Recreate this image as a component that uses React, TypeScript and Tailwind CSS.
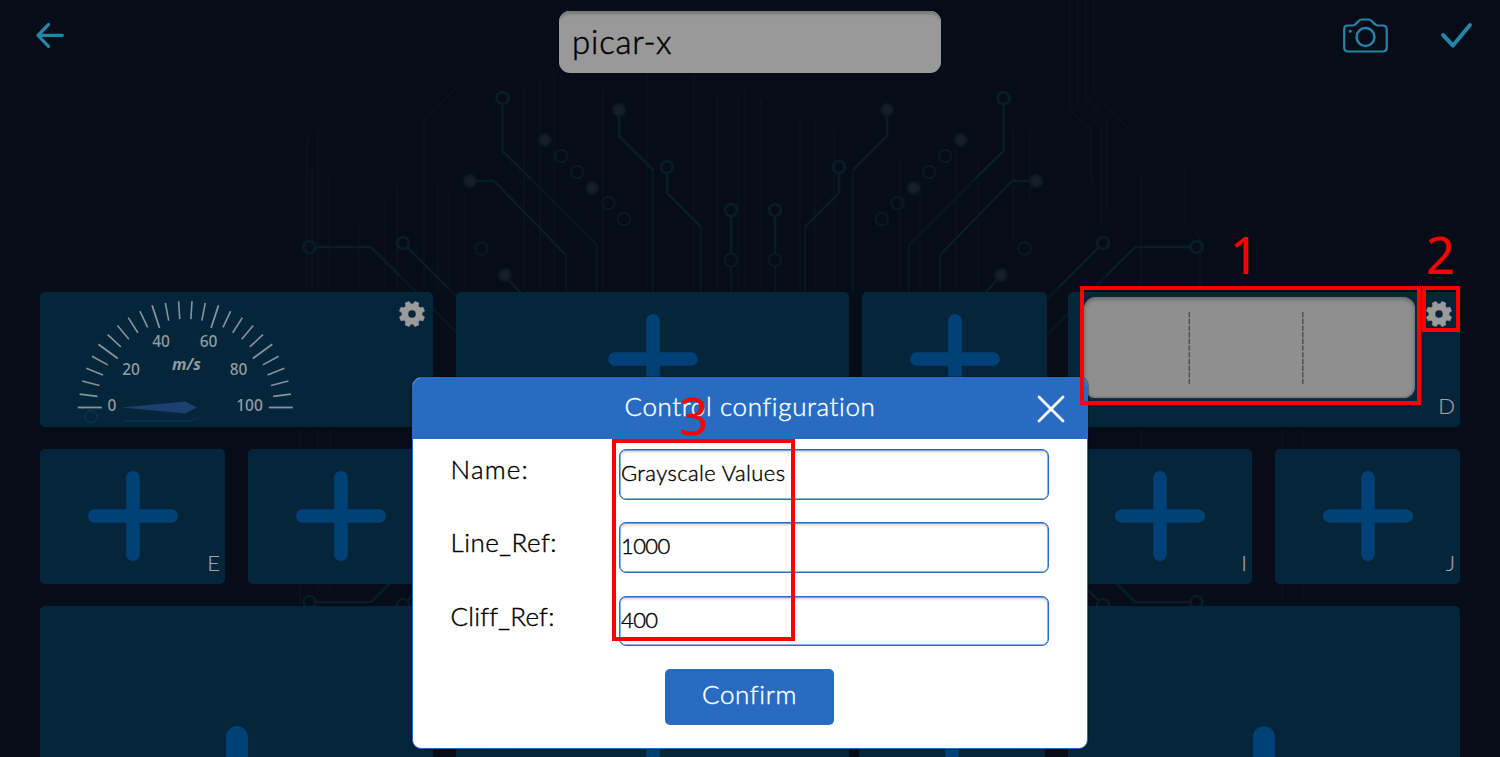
import React from "react";

const FONT = "font-['Lato','Open_Sans',sans-serif]";

type Pt = [number, number];

const rings: Pt[] = [[502.5, 98], [667, 167], [731, 210], [403, 243], [309.5, 247]];
const faintRings: Pt[] = [[561, 156], [577, 172], [608.5, 203], [624, 219], [731, 260], [481.5, 248.5]];
const dots: Pt[] = [[619, 110], [545, 140], [592.5, 188], [470, 181], [505, 275], [667, 327]];
const traces = [
  "M502.5 104V151L532 180",
  "M619 116V136L653 170",
  "M667 173V193L701 227",
  "M731 216V254",
  "M476 181H494L566 255",
  "M408 248L448 288",
  "M316 247H371L400 276",
  "M509 280L529 302V318",
  "M667 333V352",
];
const faintTraces = [
  "M532 180L597 245V292",
  "M653 170V292",
  "M701 227V292",
  "M731 267V292",
  "M566 255V292",
  "M448 288L500 340",
  "M400 276L469 345V376",
];
const hairlines = [
  [307, 140, 290], [312, 170, 290], [318, 130, 290], [329, 175, 290], [359, 225, 290], [385, 200, 290],
  [397, 185, 290], [438, 180, 290], [449, 190, 290], [465, 195, 290], [524, 90, 290], [540, 80, 290],
  [554, 75, 290], [603, 90, 290], [647, 75, 290], [694, 75, 290], [717, 95, 290], [738, 95, 290],
  [745, 90, 290], [761, 100, 290], [800, 115, 290], [815, 120, 290], [834, 130, 290], [900, 160, 290],
  [920, 180, 290], [956, 150, 290], [978, 160, 290], [1013, 130, 240], [1030, 130, 200], [1141, 175, 285],
  [300, 430, 605], [318, 430, 590], [330, 430, 590], [1141, 430, 500], [1282, 430, 600], [1303, 430, 600],
];

function CircuitHalf() {
  return (
    <g>
      <g stroke="#071722" strokeWidth="2.2">
        {faintTraces.map((d) => <path key={d} d={d} />)}
      </g>
      <g stroke="#091d28" strokeWidth="2.5">
        {traces.map((d) => <path key={d} d={d} />)}
        {rings.map(([x, y]) => <circle key={x} cx={x} cy={y} r="5.9" strokeWidth="2.8" />)}
      </g>
      <g stroke="#081a26" strokeWidth="2">
        {faintRings.map(([x, y]) => <circle key={x} cx={x} cy={y} r="6.3" />)}
      </g>
      <g fill="#1a1d28" stroke="#0a1b26" strokeWidth="2.2">
        {dots.map(([x, y]) => <circle key={x} cx={x} cy={y} r="5.8" />)}
      </g>
      <g stroke="#091d28" strokeWidth="2.4">
        <path d="M316 602H371L412 561M408 600L430 578" />
        <circle cx="309.5" cy="602" r="6" />
        <circle cx="403" cy="605" r="6" />
        <circle cx="499" cy="747" r="6" />
      </g>
    </g>
  );
}

function Circuit() {
  return (
    <svg className="absolute inset-0" width="1500" height="757" viewBox="0 0 1500 757" fill="none">
      <g stroke="#0a101c" strokeWidth="2">
        {hairlines.map(([x, a, b]) => <path key={`${x}-${a}`} d={`M${x} ${a}V${b}`} />)}
        <path d="M424 290V122L459 84M1070 0V110L1091 130V180M1078 0V104L1101 127V225M1086 0V98L1107 120V210M1094 0V92L1132 132M1185 165V222L1200 238V290" />
      </g>
      <CircuitHalf />
      <g transform="translate(1506 0) scale(-1 1)">
        <CircuitHalf />
      </g>
    </svg>
  );
}

function Gear({ className = "" }: { className?: string }) {
  const parts: string[] = [];
  for (let i = 0; i < 8; i++) {
    const base = 22.5 + i * 45;
    const spec: [number, number][] = [[-16, 10.2], [-9.5, 13], [9.5, 13], [16, 10.2]];
    for (const [da, r] of spec) {
      const t = ((base + da) * Math.PI) / 180;
      parts.push(`${(14 + r * Math.sin(t)).toFixed(2)} ${(14 - r * Math.cos(t)).toFixed(2)}`);
    }
  }
  return (
    <svg className={className} width="28" height="28" viewBox="0 0 28 28">
      <path
        fillRule="evenodd"
        fill="#9b9b9b"
        stroke="#9b9b9b"
        strokeWidth=".4"
        strokeLinejoin="round"
        d={`M${parts.join("L")}ZM14 10a4 4 0 1 0 0 8a4 4 0 1 0 0-8Z`}
      />
    </svg>
  );
}

function Plus({ size = 90, thick = 13.6 }: { size?: number; thick?: number }) {
  const c = size / 2;
  const e = thick / 2;
  return (
    <svg width={size} height={size} viewBox={`0 0 ${size} ${size}`} className="ml-px shrink-0">
      <path d={`M${c} ${e}V${size - e}M${e} ${c}H${size - e}`} stroke="#004278" strokeWidth={thick} strokeLinecap="round" />
    </svg>
  );
}

function Gauge() {
  const cx = 145.3;
  const cy = 115.5;
  const ticks = Array.from({ length: 26 }, (_, i) => {
    const a = (i * 7.2 * Math.PI) / 180;
    const major = i % 5 === 0;
    const inner = major ? 83.5 : 88.5;
    const outer = major ? 107.5 : 106.5;
    return { x1: cx - inner * Math.cos(a), y1: cy - inner * Math.sin(a), x2: cx - outer * Math.cos(a), y2: cy - outer * Math.sin(a), major };
  });
  const labels: [string, number, number][] = [
    ["0", 72, 119], ["20", 91, 82.5], ["40", 121, 55], ["60", 168.5, 55], ["80", 198.5, 82.5], ["100", 209.5, 119],
  ];
  return (
    <svg width="280" height="134" viewBox="0 0 280 134">
      <circle cx="51" cy="124.500" r="6" fill="none" stroke="#073049" strokeWidth="2" />
      <path d="M84 129H152A6 6 0 0 1 160 127" fill="none" stroke="#073049" strokeWidth="2" />
      {ticks.map((t, i) => (
        <line key={i} x1={t.x1} y1={t.y1} x2={t.x2} y2={t.y2} stroke="#87949b" strokeWidth={t.major ? 1.8 : 1.6} />
      ))}
      <path d="M82 115.500L145.300 109.500L157 115.500L145.300 121.500Z" fill="#1c4170" />
      <g fill="#929ca0" fontFamily="'Noto Sans', sans-serif" fontSize="15.5" fontWeight="500" textAnchor="middle">
        {labels.map(([s, x, y]) => <text key={s} x={x} y={y}>{s}</text>)}
        <text x="146.500" y="77.500" fontWeight="700" fontStyle="italic" fontSize="16">m/s</text>
      </g>
    </svg>
  );
}

function Tile({ w, h = 134, label, children }: { w: string; h?: number; label?: string; children?: React.ReactNode }) {
  return (
    <div className={`relative flex shrink-0 items-center justify-center rounded-[5px] bg-[#05283e]/90 ${h === 134 ? "h-[134.500px]" : "h-[340px]"} ${w}`}>
      {children}
      {label && <span className={`absolute right-[5px] bottom-[7px] text-[22px] leading-[28px] font-light text-[#a0a4a7] [-webkit-text-stroke:0.2px] ${FONT}`}>{label}</span>}
    </div>
  );
}

function Field({ label, value, ls, vs }: { label: string; value: string; ls: string; vs: string }) {
  return (
    <div className="flex h-[50.500px] items-start">
      <span className={`w-[168.500px] pt-[2px] text-[26px] leading-[36px] whitespace-nowrap text-black ${ls}`}>{label}</span>
      <div className={`flex h-full w-[430px] items-start rounded-[7px] border border-[#286bc1] bg-white px-px pt-[8px] text-[22px] leading-[30px] whitespace-nowrap text-black shadow-[inset_0_0_0_0.5px_#286bc1,inset_0_4px_3px_-2px_#cfcfcf] ${vs}`}>
        <span>{value}</span>
      </div>
    </div>
  );
}

export default function App() {
  return (
    <div className={`relative flex h-[757px] w-[1500px] flex-col overflow-hidden bg-[#070d18] font-light ${FONT}`}>
      <Circuit />
      <header className="relative flex h-[292px] shrink-0 items-start justify-between pr-[26px] pl-[34px]">
        <svg className="mt-[20px]" width="32" height="32" viewBox="0 0 32 32" fill="none" stroke="#2585a8" strokeWidth="3.300" strokeLinecap="round" strokeLinejoin="round">
          <path d="M28.300 15.300H4M14.500 4.500L4 15.300L14.500 26.300" />
        </svg>
        <div className="mt-[11px] ml-[92px] h-[62px] w-[382px] rounded-[11px] bg-[#999] pt-[8px] pl-[13px] text-[33px] leading-[44px] tracking-[0.800px] text-black shadow-[inset_0_5px_3px_-2px_#777,inset_0_1px_1px_#aaa] [-webkit-text-stroke:0.5px]">
          picar-x
        </div>
        <div className="flex gap-[48px]">
          <svg className="mt-[16px]" width="48" height="40" viewBox="0.8 0 48 40" fill="none" stroke="#2585a8" strokeWidth="2.200" strokeLinejoin="round">
            <path d="M6.500 9.500H11.500C14 9.500 16 6.500 17.500 5C18.500 3.800 19.500 3.500 21 3.500H27C28.500 3.500 29.500 3.800 30.500 5C32 6.500 34 9.500 36.500 9.500H41.500Q45.500 9.500 45.500 13.500V31.500Q45.500 35.500 41.500 35.500H7Q3 35.500 3 31.500V13.500Q3 9.500 6.500 9.500Z" />
            <circle cx="24.300" cy="21" r="8.900" strokeWidth="2.500" />
            <circle cx="9" cy="15.300" r="1.500" fill="#2585a8" stroke="none" />
          </svg>
          <svg className="mt-[20px]" width="36" height="32" viewBox="0 0 36 32" fill="none" stroke="#2585a8" strokeWidth="4" strokeLinecap="round" strokeLinejoin="round">
            <path d="M5 15L15 25.500L32 5" />
          </svg>
        </div>
      </header>

      <main className="relative flex shrink-0 flex-col gap-[22.700px] pr-[40px] pl-[39.500px]">
        <div className="flex">
          <Tile w="w-[393.500px]">
            <div className="absolute top-0 left-0"><Gauge /></div>
            <Gear className="absolute top-[7.500px] right-[7px]" />
          </Tile>
          <div className="w-[22.500px]" />
          <Tile w="w-[393px]"><Plus /></Tile>
          <div className="w-[13px]" />
          <Tile w="w-[185.500px]"><Plus /></Tile>
          <div className="w-[20.500px]" />
          <Tile w="w-[392.500px]" label="D">
            <div className="absolute top-[5px] left-[16px] h-[100.500px] w-[331.500px] rounded-[12px] bg-[#8f8f8f] shadow-[inset_0_2px_4px_#666,inset_0_-1px_2px_#777,0_1px_3px_#24364a]">
              <svg width="331" height="100" viewBox="0 0 331 100" stroke="#505050" strokeWidth="1.500" strokeDasharray="5.300 1.400">
                <path d="M105.300 15V87M218.800 15V87" />
              </svg>
            </div>
            <Gear className="absolute top-[7.500px] right-[7px]" />
          </Tile>
        </div>
        <div className="flex justify-between">
          <Tile w="w-[185.500px]" label="E"><Plus /></Tile>
          <Tile w="w-[185.500px]"><Plus /></Tile>
          <Tile w="w-[380.500px]"><Plus /></Tile>
          <Tile w="w-[185.500px]"><Plus /></Tile>
          <Tile w="w-[185.500px]" label="I"><Plus /></Tile>
          <Tile w="w-[185.500px]" label="J"><Plus /></Tile>
        </div>
        <div className="flex">
          <Tile w="w-[393.500px]" h={340}><div className="absolute top-[120px]"><Plus size={146} thick={22} /></div></Tile>
          <div className="w-[22.500px]" />
          <Tile w="w-[393px]" h={340}><div className="absolute top-[120px]"><Plus /></div></Tile>
          <div className="w-[10.500px]" />
          <Tile w="w-[185.500px]" h={340}><div className="absolute top-[120px]"><Plus /></div></Tile>
          <div className="w-[23px]" />
          <Tile w="w-[392.500px]" h={340}><div className="absolute top-[120px]"><Plus size={146} thick={22} /></div></Tile>
        </div>
      </main>

      <section className="absolute top-[376.500px] left-[412px] flex h-[372px] w-[676px] flex-col overflow-hidden rounded-[9px] border border-[#286bc1] bg-white shadow-[0_0_2px_#000] [-webkit-text-stroke:0.4px]">
        <div className="relative flex h-[61px] shrink-0 items-center justify-center bg-[#286bc1] pb-[4px]">
          <h1 className="text-[26px] leading-[36px] tracking-[0.600px] text-white">Control configuration</h1>
          <svg className="absolute top-[16px] right-[21px]" width="30" height="30" viewBox="0 0 30 30" stroke="#fff" strokeWidth="2.800" strokeLinecap="round">
            <path d="M3 3L27 27M27 3L3 27" />
          </svg>
        </div>
        <div className="flex flex-col gap-[22.800px] pt-[10.700px] pl-[37.500px]">
          <Field label="Name:" value="Grayscale Values" ls="tracking-[1.200px]" vs="tracking-[0.400px]" />
          <Field label="Line_Ref:" value="1000" ls="tracking-[0.500px]" vs="tracking-[-0.600px]" />
          <Field label="Cliff_Ref:" value="400" ls="tracking-[0.200px]" vs="tracking-[-0.600px]" />
        </div>
        <button className="mt-[22.300px] mr-px flex h-[56px] w-[169px] shrink-0 justify-center self-center rounded-[5px] bg-[#286bc1] pt-[7px] text-[26px] leading-[36px] tracking-[0.600px] text-white">
          Confirm
        </button>
      </section>

      <div className="absolute top-[286px] left-[1080px] h-[119px] w-[341px] border-4 border-[#f00]" />
      <div className="absolute top-[286px] left-[1422px] h-[46px] w-[38px] border-4 border-[#f00]" />
      <div className="absolute top-[439px] left-[612px] h-[202px] w-[183px] border-4 border-[#f00]" />
      <div className="absolute top-[224px] left-[1230px] font-['Noto_Sans',sans-serif] text-[51px] leading-[60px] font-normal text-[#f00] [-webkit-text-stroke:0.2px]">1</div>
      <div className="absolute top-[224px] left-[1426px] font-['Noto_Sans',sans-serif] text-[51px] leading-[60px] font-normal text-[#f00] [-webkit-text-stroke:0.2px]">2</div>
      <div className="absolute top-[385px] left-[679px] font-['Noto_Sans',sans-serif] text-[51px] leading-[60px] font-normal text-[#f00] [-webkit-text-stroke:0.2px]">3</div>
    </div>
  );
}
